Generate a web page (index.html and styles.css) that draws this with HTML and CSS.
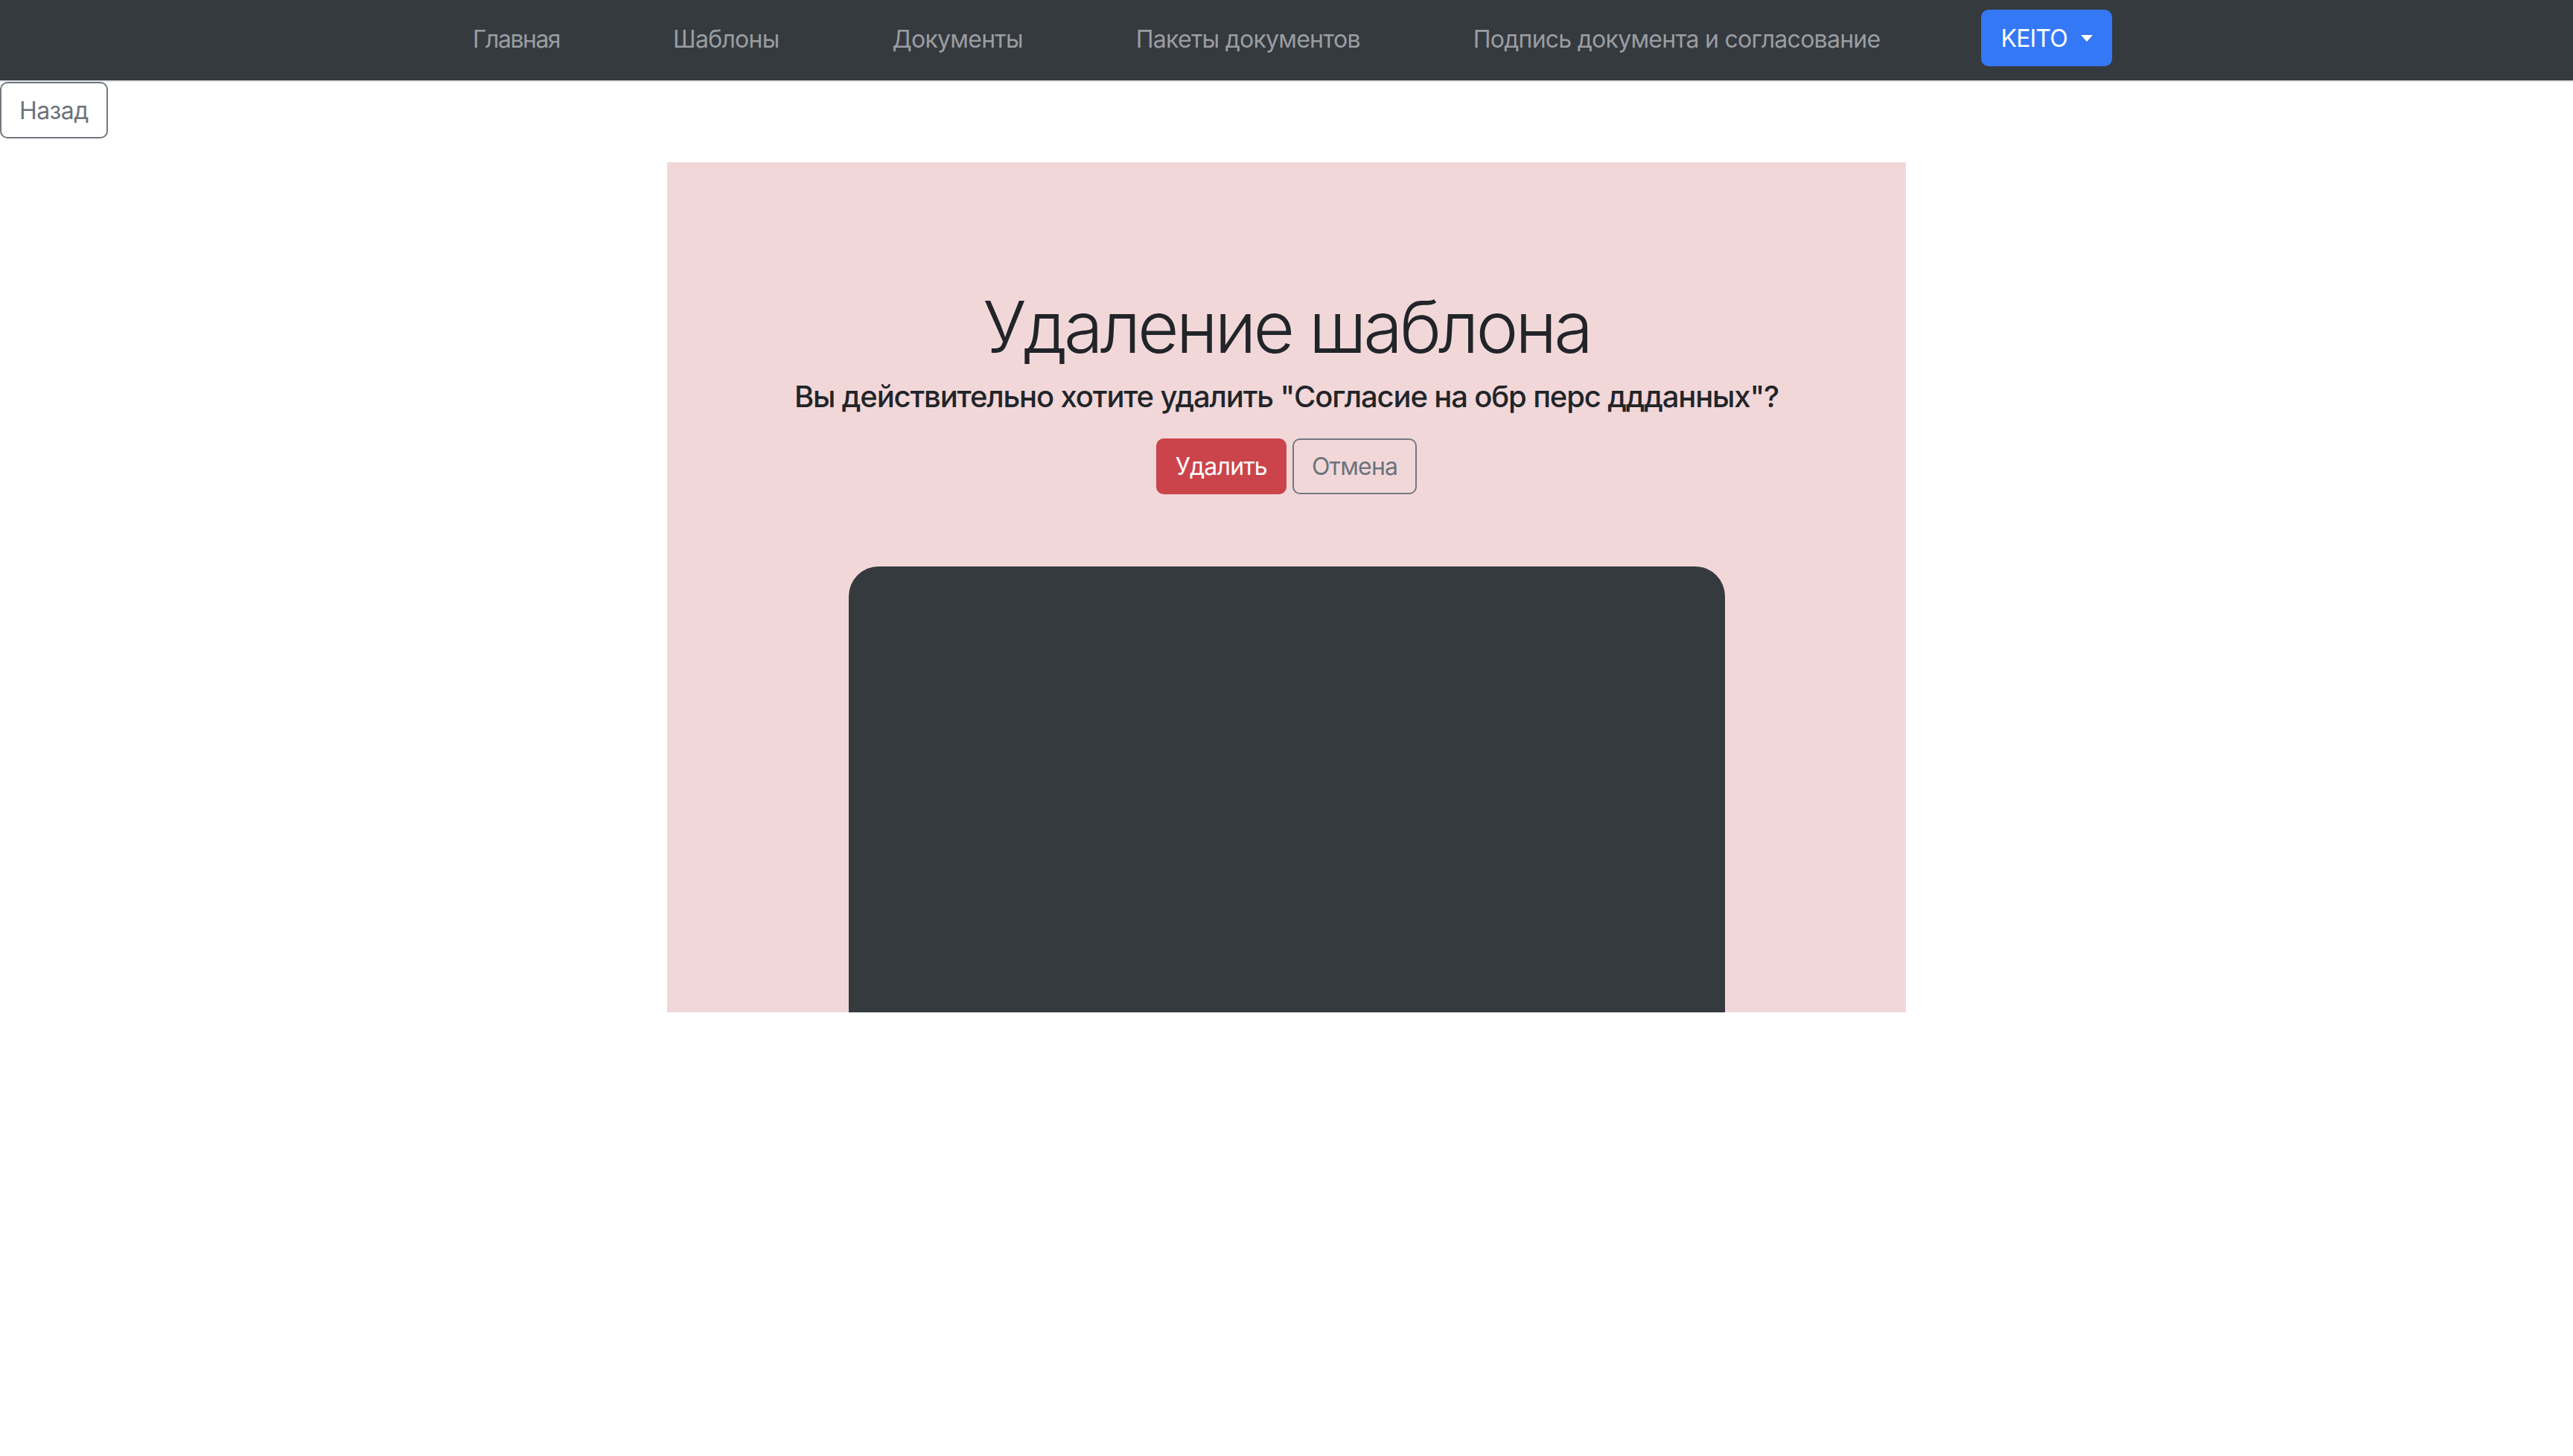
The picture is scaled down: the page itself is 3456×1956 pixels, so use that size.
FILE: index.html
```html
<!DOCTYPE html>
<html lang="ru">
<head>
<meta charset="utf-8">
<title>Удаление шаблона</title>
<link rel="stylesheet" href="styles.css">
</head>
<body>
<nav class="navbar">
  <a class="nav-link nav-first" href="#">Главная</a>
  <a class="nav-link" href="#">Шаблоны</a>
  <a class="nav-link" href="#">Документы</a>
  <a class="nav-link" href="#">Пакеты документов</a>
  <a class="nav-link" href="#">Подпись документа и согласование</a>
  <button class="user-btn" type="button">KEITO<span class="caret"></span></button>
</nav>
<button class="back-btn" type="button">Назад</button>
<main class="panel">
  <h1 class="title">Удаление шаблона</h1>
  <h5 class="question">Вы действительно хотите удалить "Согласие на обр перс ддданных"?</h5>
  <div class="actions">
    <button class="btn-delete" type="button">Удалить</button>
    <button class="btn-cancel" type="button">Отмена</button>
  </div>
  <div class="preview"></div>
</main>
</body>
</html>
```
FILE: styles.css
```css
html, body {
  margin: 0;
  padding: 0;
  background: #ffffff;
}
body {
  font-family: "Inter", "Liberation Sans", sans-serif;
  color: #212529;
}
.navbar {
  display: flex;
  align-items: center;
  height: 110px;
  padding: 0 0 2px 559px;
  box-sizing: border-box;
  background: #353a3f;
  border-bottom: 2px solid #dfe1e5;
}
.nav-link {
  padding: 0 76px;
  font-size: 32px;
  letter-spacing: -0.74px;
  color: #9a9da1;
  text-decoration: none;
  line-height: 48px;
}
.nav-first {
  letter-spacing: -1.5px;
}
.user-btn {
  display: flex;
  align-items: center;
  margin-left: 60px;
  margin-top: -4px;
  height: 76px;
  padding: 0 26px 0 26px;
  border: none;
  border-radius: 10px;
  background: #3478f6;
  color: #ffffff;
  font-family: inherit;
  font-size: 32px;
  letter-spacing: -0.8px;
}
.caret {
  display: inline-block;
  margin-left: 18px;
  width: 0;
  height: 0;
  border-top: 9px solid #ffffff;
  border-left: 8px solid transparent;
  border-right: 8px solid transparent;
}
.back-btn {
  display: block;
  margin: 0;
  height: 76px;
  padding: 0 24px;
  border: 2px solid #727880;
  border-radius: 10px;
  background: #ffffff;
  color: #6c737b;
  font-family: inherit;
  font-size: 32px;
  letter-spacing: -0.6px;
}
.panel {
  width: 1664px;
  height: 1142px;
  margin: 32px auto 0;
  padding-top: 164px;
  box-sizing: border-box;
  background: #f2d7d9;
  overflow: hidden;
  display: flex;
  flex-direction: column;
  align-items: center;
}
.title {
  margin: 0 0 12px;
  font-size: 96px;
  font-weight: 300;
  line-height: 115px;
  letter-spacing: -4.1px;
  color: #212529;
}
.question {
  margin: 0 0 32px;
  font-size: 40px;
  font-weight: 500;
  line-height: 48px;
  letter-spacing: -1.15px;
  color: #212529;
}
.actions {
  display: flex;
  gap: 8px;
}
.btn-delete, .btn-cancel {
  height: 75px;
  padding: 0 24px;
  border-radius: 10px;
  font-family: inherit;
  font-size: 32px;
  letter-spacing: -0.8px;
}
.btn-delete {
  border: 2px solid #cb444b;
  background: #cb444b;
  color: #ffffff;
}
.btn-cancel {
  border: 2px solid #727880;
  background: transparent;
  color: #6c737b;
}
.preview {
  flex: none;
  margin-top: 97px;
  width: 1177px;
  height: 900px;
  background: #353a3f;
  border-radius: 40px 40px 0 0;
}
```
